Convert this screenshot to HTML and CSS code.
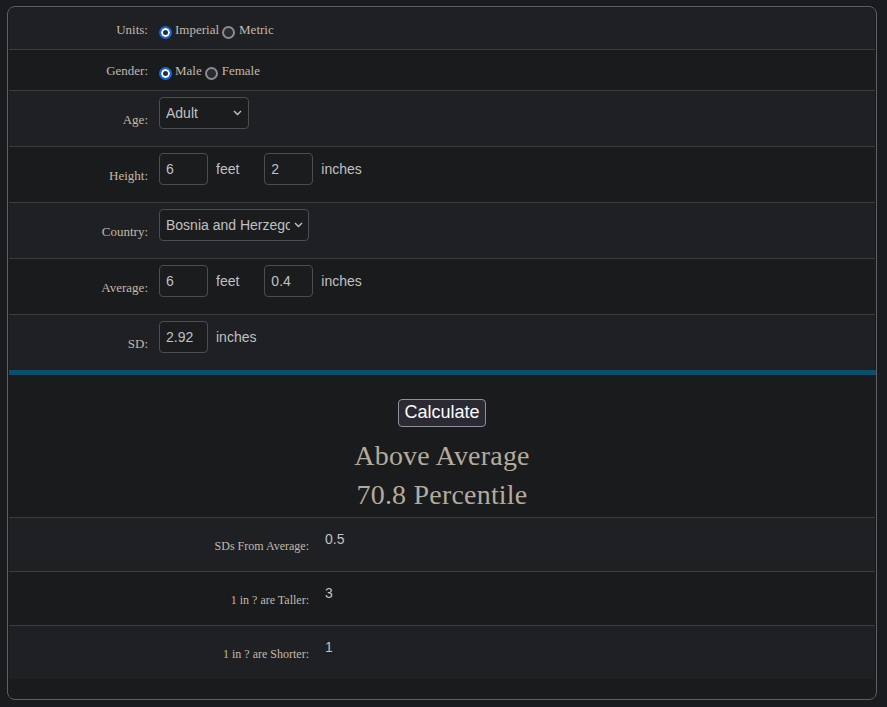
FILE: index.html
```html
<!DOCTYPE html>
<html lang="en">
<head>
<meta charset="utf-8">
<title>Height Percentile Calculator</title>
<link rel="stylesheet" href="styles.css">
</head>
<body>
<div class="card">
  <div class="form">
    <div class="row r-short alt">
      <div class="lbl">Units:</div>
      <div class="val radios">
        <input type="radio" name="units" checked><span class="rtext">Imperial</span>
        <input type="radio" name="units" class="second"><span class="rtext">Metric</span>
      </div>
    </div>
    <div class="row r-short2">
      <div class="lbl">Gender:</div>
      <div class="val radios">
        <input type="radio" name="gender" checked><span class="rtext">Male</span>
        <input type="radio" name="gender" class="second"><span class="rtext">Female</span>
      </div>
    </div>
    <div class="row r-tall alt">
      <div class="lbl">Age:</div>
      <div class="val">
        <div class="sel sel-age">
          <select><option>Adult</option></select>
          <svg class="chev" width="9" height="6" viewBox="0 0 9 6"><path d="M1 1l3.5 3.5L8 1" fill="none" stroke="#c0c2c5" stroke-width="1.4"/></svg>
        </div>
      </div>
    </div>
    <div class="row r-tall">
      <div class="lbl">Height:</div>
      <div class="val">
        <input class="num" type="text" value="6"><span class="unit u-gap">feet</span>
        <input class="num" type="text" value="2"><span class="unit">inches</span>
      </div>
    </div>
    <div class="row r-tall alt">
      <div class="lbl">Country:</div>
      <div class="val">
        <div class="sel sel-country">
          <select><option>Bosnia and Herzegovina</option></select>
          <svg class="chev" width="9" height="6" viewBox="0 0 9 6"><path d="M1 1l3.5 3.5L8 1" fill="none" stroke="#c0c2c5" stroke-width="1.4"/></svg>
        </div>
      </div>
    </div>
    <div class="row r-tall">
      <div class="lbl">Average:</div>
      <div class="val">
        <input class="num" type="text" value="6"><span class="unit u-gap">feet</span>
        <input class="num" type="text" value="0.4"><span class="unit">inches</span>
      </div>
    </div>
    <div class="row r-tall alt last">
      <div class="lbl">SD:</div>
      <div class="val">
        <input class="num" type="text" value="2.92"><span class="unit">inches</span>
      </div>
    </div>
  </div>
  <div class="bar"></div>
  <div class="result">
    <button class="calc" type="button">Calculate</button>
    <h2 class="verdict">Above Average<br>70.8 Percentile</h2>
  </div>
  <div class="stats">
    <div class="srow alt">
      <div class="slbl">SDs From Average:</div>
      <div class="sval">0.5</div>
    </div>
    <div class="srow">
      <div class="slbl">1 in ? are Taller:</div>
      <div class="sval">3</div>
    </div>
    <div class="srow alt last">
      <div class="slbl">1 in ? are Shorter:</div>
      <div class="sval">1</div>
    </div>
  </div>
  <div class="foot"></div>
</div>
</body>
</html>
```
FILE: styles.css
```css
html, body {
  margin: 0;
  padding: 0;
  background: #1a1b1e;
  color-scheme: dark;
}

body {
  height: 707px;
  overflow: hidden;
}

.card {
  box-sizing: border-box;
  width: 870px;
  height: 694px;
  margin: 6px 0 0 7px;
  padding: 1px;
  border: 1px solid #5d5f63;
  border-radius: 8px;
  background: #1a1b1d;
  overflow: hidden;
  display: flex;
  flex-direction: column;
}

.row {
  display: grid;
  grid-template-columns: 139px 1fr;
  column-gap: 11px;
  border-bottom: 1px solid #3a3c3f;
  background: #1a1b1d;
}

.row.alt { background: #1f2023; }
.row.last { border-bottom: none; }

.r-short { height: 41px; align-items: center; }
.r-short2 { height: 40px; align-items: center; }
.r-tall { height: 55px; }

.lbl {
  font-family: "Liberation Serif", "DejaVu Serif", serif;
  font-size: 13px;
  color: #c1b9ab;
  text-align: right;
  align-self: center;
}

.r-short .lbl, .r-short .val { padding-top: 3px; }
.r-short2 .lbl, .r-short2 .val { padding-top: 2px; }
.r-tall .lbl { padding-top: 2px; }

.val {
  display: flex;
  align-items: center;
}

.r-tall .val {
  align-self: start;
  padding-top: 6px;
}

.radios input[type="radio"] {
  -webkit-appearance: none;
  appearance: none;
  box-sizing: border-box;
  width: 13px;
  height: 13px;
  margin: 4px 3px 0 0;
  border-radius: 50%;
  border: 2px solid #8b8b93;
  background: #2a2a2f;
  flex: none;
}

.radios input[type="radio"]:checked {
  border: 2px solid #1565e0;
  background: #1b2f57;
  box-shadow: inset 0 0 0 2px #ffffff;
}

.radios input.second { margin-left: 3px; margin-right: 4px; }

.rtext {
  font-family: "Liberation Serif", "DejaVu Serif", serif;
  font-size: 13px;
  color: #c1b9ab;
}

.num {
  box-sizing: border-box;
  width: 49px;
  height: 32px;
  padding: 0 6px;
  border: 1px solid #4a4d52;
  border-radius: 4px;
  background: #1b1c1e;
  color: #bfc1c4;
  font-family: "Liberation Sans", Arial, sans-serif;
  font-size: 14px;
  outline: none;
  margin: 0;
}

.unit {
  font-family: "Liberation Sans", Arial, sans-serif;
  font-size: 14px;
  color: #bfc1c4;
  margin-left: 8px;
}

.u-gap { margin-right: 25px; }

.sel {
  position: relative;
  display: inline-block;
}

.sel select {
  box-sizing: border-box;
  height: 32px;
  padding: 0 20px 0 6px;
  border: 1px solid #4a4d52;
  border-radius: 4px;
  background: #1b1c1e;
  color: #bfc1c4;
  font-family: "Liberation Sans", Arial, sans-serif;
  font-size: 14px;
  -webkit-appearance: none;
  appearance: none;
  outline: none;
  margin: 0;
}

.sel-age select { width: 90px; }
.sel-country select { width: 150px; padding-right: 18px; }

.chev {
  position: absolute;
  top: 13px;
  right: 7px;
  pointer-events: none;
}

.sel-country .chev { right: 6px; }

.bar {
  height: 5px;
  background: #0e4e6d;
  margin-right: -1px;
  flex: none;
}

.result {
  height: 142px;
  border-bottom: 1px solid #3a3c3f;
  display: flex;
  flex-direction: column;
  align-items: center;
  flex: none;
  background: #1a1b1d;
}

.calc {
  margin: 24px 0 0 0;
  padding: 2px 5px 3px;
  height: 28px;
  box-sizing: border-box;
  background: #2b2a33;
  color: #fbfbfe;
  border: 1px solid #8f8f9d;
  border-radius: 4px;
  font-family: "Liberation Sans", Arial, sans-serif;
  font-size: 18px;
  line-height: 21px;
}

.verdict {
  margin: 9px 0 0 0;
  font-family: "Liberation Serif", "DejaVu Serif", serif;
  font-weight: normal;
  font-size: 28px;
  line-height: 39px;
  letter-spacing: 0.2px;
  color: #b4ab9c;
  text-align: center;
}

.srow {
  display: grid;
  grid-template-columns: 300px 1fr;
  column-gap: 16px;
  height: 53px;
  border-bottom: 1px solid #3a3c3f;
  background: #1a1b1d;
}

.srow.alt { background: #1f2023; }
.srow.last { border-bottom: none; height: 53px; }

.slbl {
  font-family: "Liberation Serif", "DejaVu Serif", serif;
  font-size: 12px;
  color: #c1b9ab;
  text-align: right;
  align-self: center;
  padding-top: 3px;
}

.sval {
  font-family: "Liberation Sans", Arial, sans-serif;
  font-size: 14px;
  color: #bfc1c4;
  padding-top: 13px;
  line-height: 16px;
}

.foot {
  flex: 1;
  background: #1a1b1d;
}
```
